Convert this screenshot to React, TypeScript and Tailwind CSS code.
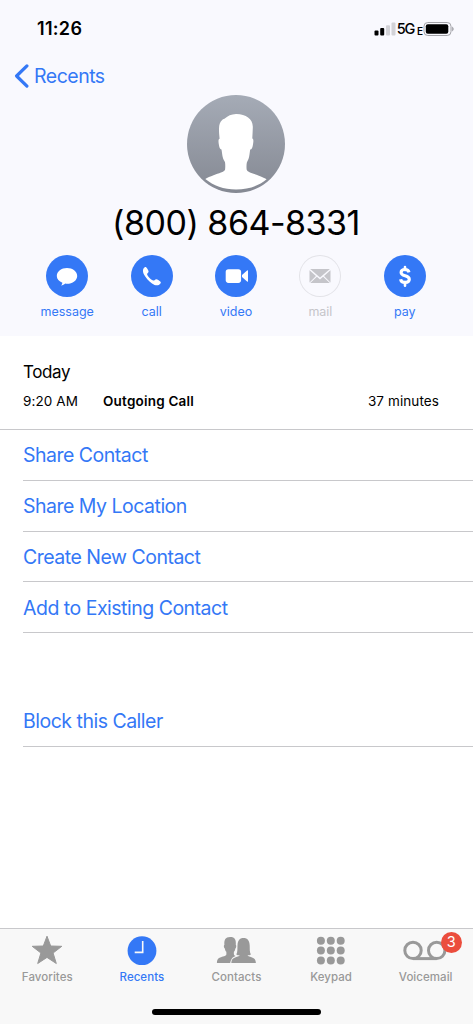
import type { ReactNode } from 'react';
import { clsx } from 'clsx';

interface Action {
  label: string;
  icon: ReactNode;
  disabled?: boolean;
}

interface Tab {
  label: string;
  icon: ReactNode;
  active?: boolean;
  badge?: number;
}

const ACTIONS: Action[] = [
  {
    label: 'message',
    icon: (
      <path d="M21 13.100c5.600 0 10.200 3.400 10.200 7.800s-4.600 7.800-10.200 7.800c-.7 0-1.200-.1-1.800-.2-1.100 1-2.500 1.700-4.100 1.900.8-.9 1.200-1.700 1.300-2.700-3.300-1.300-5.600-3.800-5.600-6.800 0-4.400 4.600-7.800 10.200-7.800z" />
    ),
  },
  {
    label: 'call',
    icon: (
      <path d="M12.400 13.700c.8-1.200 1.800-1.900 2.700-1.500.9.4 2.400 3.200 2.500 4.300.1 1-1.600 1.800-1.500 2.700.2 1.700 4.400 6 6.300 6.400 1 .2 1.700-1.400 2.800-1.400 1.100.1 4 1.900 4.500 2.800.5 1-.5 2.200-1.900 2.900-1.900.9-4.300.2-6.800-1.500-3.300-2.200-6.500-5.700-8-8.800-1.100-2.300-1.400-4.500-.6-5.900z" />
    ),
  },
  {
    label: 'video',
    icon: (
      <>
        <rect x="10.700" y="14.200" width="15.400" height="13.700" rx="2.800" />
        <path d="M27 20.100 32.100 15.500c.4-.3.900-.1.900.4v10.300c0 .5-.5.700-.9.400L27 22z" />
      </>
    ),
  },
  {
    label: 'mail',
    disabled: true,
    icon: (
      <>
        <path d="M11.200 14.100h19.700L21 22.600z" />
        <path d="M10.500 15.200 17 21l-6.500 6.400zM31.500 15.200 25 21l6.500 6.400z" />
        <path d="M17.900 21.700 21 24.400l3.100-2.700 6.700 6.400H11.200z" />
      </>
    ),
  },
  {
    label: 'pay',
    icon: (
      <g fill="none" stroke="currentColor">
        <path d="M25 17.300c-.4-1.800-1.900-2.800-4-2.800-2.300 0-3.900 1.200-3.900 3 0 4.400 8.200 2.100 8.200 6.700 0 2-1.700 3.200-4.200 3.200-2.600 0-4.200-1.200-4.500-3.200" strokeWidth="3.100" />
        <path d="M21 12v3M21 27.300v3.500" strokeWidth="2.600" strokeLinecap="round" />
      </g>
    ),
  },
];

const LINKS = ['Share Contact', 'Share My Location', 'Create New Contact', 'Add to Existing Contact'];

const DOTS = [5.700, 15.600, 25.500];

const TABS: Tab[] = [
  {
    label: 'Favorites',
    icon: (
      <path
        d="M20 1.200 23.700 11 34.800 11.300 26.100 18 29.300 28.500 20 22.400 10.700 28.500 13.900 18 5.200 11.300 16.300 11Z"
        stroke="currentColor"
        strokeLinejoin="round"
      />
    ),
  },
  {
    label: 'Recents',
    active: true,
    icon: (
      <>
        <circle cx="20" cy="15.700" r="14.400" />
        <path d="M20.700 5.900v11.500h-8" fill="none" stroke="#f8f8f8" strokeWidth="1.600" />
      </>
    ),
  },
  {
    label: 'Contacts',
    icon: (
      <>
        <path d="M.9 28c0-3 .9-4.500 3.200-5.400 2.500-1 5.800-1.500 6.200-2.800.2-.9.100-2.100 0-3-.8-.8-1.200-2-1.500-3.400-1-.6-1.300-2.900-.4-3.700-.4-5 1-7.600 5.700-7.800 4.500-.1 6.200 2.500 5.700 7.800.8.8.5 3.100-.4 3.700-.3 1.400-.7 2.600-1.500 3.400-.1 1-.1 2 .1 2.900.2.600.8 1 1.600 1.300-3 1.100-4.500 2.800-5.400 7z" />
        <path d="M15.300 28c.2-3 1.100-4.400 3.300-5.300 2.200-.8 4.800-1.200 5.100-2.400-1.500 0-2.600-.3-3.400-.9 1.500-2.500 1-5.700 1.200-9 .2-4.700 2-7.300 6-7.300s6 2.600 6.200 7.300c.2 3.300-.3 6.500 1.200 9-.8.600-1.900.9-3.400.9.300 1.200 2.900 1.600 5.100 2.400 2.200.9 3.100 2.300 3.300 5.300z" />
      </>
    ),
  },
  {
    label: 'Keypad',
    icon: DOTS.map((y) => DOTS.map((x) => <circle key={`${x}-${y}`} cx={x + 4.200} cy={y} r="4" />)),
  },
  {
    label: 'Voicemail',
    badge: 3,
    icon: (
      <g fill="none" stroke="currentColor" strokeWidth="3">
        <circle cx="7" cy="15.400" r="8.200" />
        <circle cx="30.700" cy="15.400" r="8.200" />
        <path d="M7 23.600h23.700" />
      </g>
    ),
  },
];

function StatusBar() {
  return (
    <div className="flex h-[58px] items-center justify-between pl-[37px] pr-[19px]">
      <span className="text-[18px] font-semibold leading-none tracking-[0.3px]">11:26</span>
      <div className="flex items-center">
        <svg width="23" height="16" viewBox="0 0 23 16">
          <rect x="0.500" y="9.500" width="4" height="5" rx="1" />
          <rect x="6.200" y="7" width="4" height="7.500" rx="1" />
          <g fill="#d2d2d7">
            <rect x="12" y="4.200" width="4" height="10.300" rx="1" />
            <rect x="17.500" y="1.500" width="4" height="13" rx="1" />
          </g>
        </svg>
        <span className="text-[14.500px] font-medium leading-none tracking-[-1.300px]">5G</span>
        <span className="ml-[3px] mt-[3px] text-[10px] font-semibold leading-none">E</span>
        <svg width="31" height="16" viewBox="0 0 31 16">
          <rect x="1" y="1.500" width="27" height="13" rx="3.800" fill="none" stroke="#a3a3a8" />
          <rect x="2.800" y="3.300" width="22.500" height="9.500" rx="2" />
          <path d="M29.300 6v4c1.400-.5 1.400-3.500 0-4z" fill="#a3a3a8" stroke="#a3a3a8" strokeWidth=".6" />
        </svg>
      </div>
    </div>
  );
}

function Avatar() {
  return (
    <svg width="98" height="98" viewBox="0 0 98 98" className="shrink-0">
      <defs>
        <linearGradient id="avatar" x1="0" y1="0" x2="0" y2="1">
          <stop offset="0" stopColor="#a5abb6" />
          <stop offset="1" stopColor="#858993" />
        </linearGradient>
      </defs>
      <circle cx="49" cy="49" r="49" fill="url(#avatar)" />
      <path
        d="M49 18.900c9.500-.2 16.700 4.700 16.800 12.500.1 4.400-.4 8.200-.5 12.200 1.500.4 1.200 3.400.6 6.300-.4 2.400-1.200 4.700-2.700 4.600-.5 3.200-.8 6-1.200 7.800-.6 2.800-1.600 3.600-2.200 5.400-.4 2.600-.4 5-.1 7 .8 2.600 7.300 4 12.200 6 3.600 1.400 6.200 2.500 7.700 3.600-8 6.700-18.300 10.200-30.600 10.200s-22.600-3.700-30.700-10.400c2-1.600 5-2.600 8.200-3.800 5.200-1.900 10.800-3.200 11.600-5.700.2-2 .3-5-.1-7.300-.7-1.700-1.700-2.700-2.300-5.300-.4-1.800-.7-4.300-1.200-7.500-1.600.1-2.200-2.300-2.600-4.700-.5-3-.8-5.600.7-6.100-.3-4-.7-6.300-.6-10.300.1-3.400.9-6.800 3.400-8.600.9-.8 1.800-.7 2.700-1.500 2.500-2.600 6.200-4.200 10.900-4.400z"
        fill="white"
      />
    </svg>
  );
}

function LinkRow({ children }: { children: ReactNode }) {
  return (
    <button className="flex h-[50.750px] w-full items-center border-b border-[#c8c8cb] pt-[2px] text-left text-[19.500px] tracking-[-0.5px] text-[#3478f6]">
      {children}
    </button>
  );
}

export default function App() {
  return (
    <div className="flex h-[1024px] w-[473px] flex-col overflow-hidden bg-white font-['Inter','Liberation_Sans',sans-serif] text-black">
      <header className="flex h-[336px] shrink-0 flex-col bg-[#f9f9fe]">
        <StatusBar />
        <button className="flex h-9 items-center gap-[5px] pl-[14px] text-[19.500px] tracking-[-0.5px] text-[#3478f6]">
          <svg width="15" height="24" viewBox="0 0 15 24" fill="none" stroke="currentColor" strokeWidth="3.200" strokeLinecap="round" strokeLinejoin="round">
            <path d="M12.900 1.900 2.600 12l10.300 10.100" />
          </svg>
          <span className="pt-[2px]">Recents</span>
        </button>
        <div className="flex flex-col items-center pr-px pt-px">
          <Avatar />
          <h1 className="mt-[9px] whitespace-nowrap text-[34px] leading-[42px] tracking-[-0.5px]">(800) 864-8331</h1>
        </div>
        <div className="mt-[11px] grid grid-cols-5 pl-[25px] pr-[26px]">
          {ACTIONS.map(({ label, icon, disabled }) => (
            <button
              key={label}
              disabled={disabled}
              className={clsx('flex flex-col items-center', disabled ? 'text-[#c5c5ca]' : 'text-[#3478f6]')}
            >
              <span
                className={clsx(
                  'flex size-[42px] items-center justify-center rounded-full',
                  disabled ? 'shadow-[inset_0_0_0_1px_#e3e3e8]' : 'bg-[#3478f6] text-white'
                )}
              >
                <svg width="42" height="42" viewBox="0 0 42 42" fill="currentColor">
                  {icon}
                </svg>
              </span>
              <span className="mt-[7px] text-[12.500px] leading-4">{label}</span>
            </button>
          ))}
        </div>
      </header>

      <section className="h-[94px] shrink-0 border-b border-[#c8c8cb] pl-[23px] pr-[34px] pt-[24px]">
        <h2 className="text-[17px] leading-6 tracking-[-0.4px]">Today</h2>
        <div className="mt-[7px] flex text-[13.500px] leading-5 tracking-[0.1px]">
          <span className="w-20">9:20 AM</span>
          <span className="font-semibold tracking-[0.2px]">Outgoing Call</span>
          <span className="ml-auto">37 minutes</span>
        </div>
      </section>

      <main className="flex-1 pl-[23px]">
        {LINKS.map((link) => (
          <LinkRow key={link}>{link}</LinkRow>
        ))}
        <div className="pt-[63px]">
          <LinkRow>Block this Caller</LinkRow>
        </div>
      </main>

      <footer className="flex h-24 shrink-0 flex-col items-center border-t border-[#c8c8cb] bg-[#f8f8f8]">
        <nav className="grid w-full grid-cols-5 pt-[6px]">
          {TABS.map(({ label, icon, active, badge }) => (
            <button
              key={label}
              className={clsx('flex flex-col items-center', active ? 'text-[#3478f6]' : 'text-[#999999]')}
            >
              <span className="relative">
                <svg width="40" height="32" viewBox="0 0 40 32" fill="currentColor" className="overflow-visible">
                  {icon}
                </svg>
                {badge && (
                  <span className="absolute -right-[16px] -top-[3px] flex size-[21px] items-center justify-center rounded-full bg-[#eb4d3d] text-[14.500px] leading-none text-white">
                    {badge}
                  </span>
                )}
              </span>
              <span className="mt-[2px] text-[11.500px] font-medium leading-4 tracking-[0.05px]">{label}</span>
            </button>
          ))}
        </nav>
        <div className="mt-[24px] h-[6px] w-[169px] rounded-full bg-black" />
      </footer>
    </div>
  );
}
